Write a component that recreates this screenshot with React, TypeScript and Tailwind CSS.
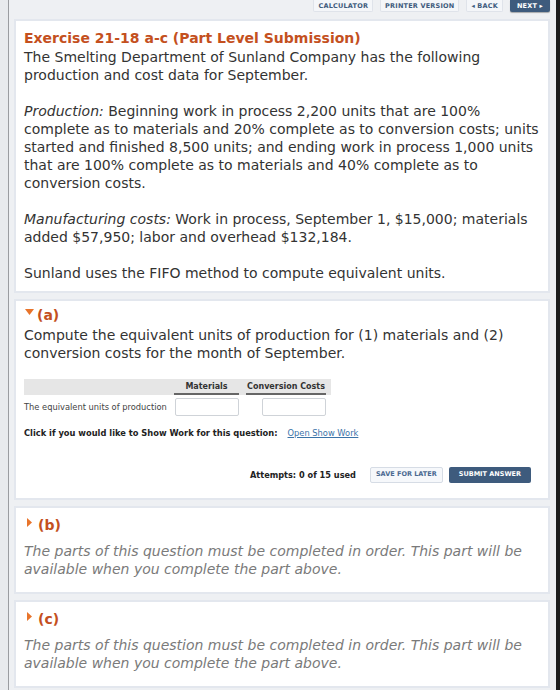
import React from "react";

const font = { fontFamily: '"DejaVu Sans", Verdana, sans-serif' };

function TopButton({ label, dark }: { label: string; dark?: boolean }) {
  return (
    <div
      className={
        dark
          ? "h-[12px] px-[7px] flex items-center rounded-b-[2px] bg-[#3e5b7d] text-white text-[6.5px] leading-[8px] font-bold tracking-[0.2px] shadow-[0_1px_1px_rgba(0,0,0,0.3)]"
          : "h-[12px] px-[4px] flex items-center rounded-b-[2px] bg-[#f4f6f9] border border-t-0 border-[#dfe3ea] text-[#3e5b7d] text-[6.5px] leading-[8px] font-bold tracking-[0.2px]"
      }
    >
      {label}
    </div>
  );
}

function Triangle({ open }: { open?: boolean }) {
  return open ? (
    <svg width="9" height="7" viewBox="0 0 9 7" className="mr-[3px] mt-[-6px]">
      <path d="M0 0 L9 0 L4.5 6 Z" fill="#e8742b" />
    </svg>
  ) : (
    <svg width="6" height="9" viewBox="0 0 6 9" className="mr-[5px] mt-[-6px] ml-[2px]">
      <path d="M0 0 L5 4.5 L0 9 Z" fill="#e8742b" />
    </svg>
  );
}

function LockedPart({ label }: { label: string }) {
  return (
    <div className="shrink-0 mt-[6px] bg-white border-2 border-[#e3e7ee] pl-[8px] pt-[8px] pb-[14px]">
      <div className="flex items-center pl-[1px] text-[14px] font-bold text-[#c4501e] leading-[18px]">
        <Triangle />
        {label}
      </div>
      <div className="mt-[8px] text-[14px] italic text-[#7a7a7a] leading-[18px]">
        The parts of this question must be completed in order. This part will be
        <br />
        available when you complete the part above.
      </div>
    </div>
  );
}

export default function App() {
  return (
    <div className="w-[560px] h-[690px] overflow-hidden bg-[#eef0f3] flex text-[#333]" style={font}>
      {/* left frame edge */}
      <div className="w-[8px] shrink-0 bg-[#e8eaed]" />
      <div className="w-[1px] shrink-0 bg-[#9a9ca0]" />
      <div className="flex-1 flex flex-col pl-[5px] pr-[6px]">
        {/* toolbar */}
        <div className="h-[19px] shrink-0 flex justify-end items-start gap-[7px]">
          <TopButton label="CALCULATOR" />
          <TopButton label="PRINTER VERSION" />
          <TopButton label="◂ BACK" />
          <TopButton label="NEXT ▸" dark />
        </div>

        {/* problem statement */}
        <div className="shrink-0 bg-white border-2 border-[#e3e7ee] pl-[8px] pt-[7px] pb-[9px] text-[14px] leading-[18px]">
          <div className="text-[14px] font-bold text-[#c4501e] leading-[20px]">
            Exercise 21-18 a-c (Part Level Submission)
          </div>
          <p>
            The Smelting Department of Sunland Company has the following
            <br />
            production and cost data for September.
          </p>
          <p className="mt-[18px]">
            <i>Production:</i> Beginning work in process 2,200 units that are 100%
            <br />
            complete as to materials and 20% complete as to conversion costs; units
            <br />
            started and finished 8,500 units; and ending work in process 1,000 units
            <br />
            that are 100% complete as to materials and 40% complete as to
            <br />
            conversion costs.
          </p>
          <p className="mt-[18px]">
            <i>Manufacturing costs:</i> Work in process, September 1, $15,000; materials
            <br />
            added $57,950; labor and overhead $132,184.
          </p>
          <p className="mt-[18px]">Sunland uses the FIFO method to compute equivalent units.</p>
        </div>

        {/* part (a) */}
        <div className="shrink-0 mt-[6px] bg-white border-2 border-[#e3e7ee] pl-[8px] pt-[5px] pb-[15px]">
          <div className="flex items-center pl-[1px] text-[14px] font-bold text-[#c4501e] leading-[18px]">
            <Triangle open />
            (a)
          </div>
          <p className="mt-[2px] text-[14px] leading-[18px]">
            Compute the equivalent units of production for (1) materials and (2)
            <br />
            conversion costs for the month of September.
          </p>

          <div className="mt-[17px] w-[307px]">
            <div className="h-[16px] bg-[#e6e6e6] flex items-end text-[8px] font-bold leading-[10px]">
              <div className="w-[150px]" />
              <div className="w-[65px] text-center border-b-2 border-[#666] pb-[1px]">Materials</div>
              <div className="w-[7px]" />
              <div className="w-[80px] text-center border-b-2 border-[#666] pb-[1px]">Conversion Costs</div>
            </div>
            <div className="flex items-center h-[24px]">
              <div className="w-[151px] text-[8.3px] text-[#444]">The equivalent units of production</div>
              <div className="w-[64px] h-[18px] border border-[#cfd3d8] rounded-[2px] bg-white" />
              <div className="w-[23px]" />
              <div className="w-[64px] h-[18px] border border-[#cfd3d8] rounded-[2px] bg-white" />
            </div>
          </div>

          <div className="mt-[8px] flex items-center text-[8.3px] leading-[12px]">
            <span className="font-bold text-[#222]">Click if you would like to Show Work for this question:</span>
            <span className="ml-[10px] text-[#3b73a8] underline">Open Show Work</span>
          </div>

          <div className="mt-[28px] flex items-center justify-end pr-[17px]">
            <span className="text-[8.2px] font-bold text-[#222]">Attempts: 0 of 15 used</span>
            <div className="ml-[14px] h-[16px] px-[5px] flex items-center border border-[#d6dce5] rounded-[2px] bg-[#f6f8fb] text-[6.5px] font-bold text-[#4b6a92]">
              SAVE FOR LATER
            </div>
            <div className="ml-[6px] h-[16px] px-[10px] flex items-center rounded-[2px] bg-[#3e5b7d] text-[6.5px] font-bold text-white">
              SUBMIT ANSWER
            </div>
          </div>
        </div>

        <LockedPart label="(b)" />
        <LockedPart label="(c)" />
      </div>
      {/* right frame edge */}
      <div className="w-[4px] shrink-0 bg-[#1d1d1d]" />
    </div>
  );
}
